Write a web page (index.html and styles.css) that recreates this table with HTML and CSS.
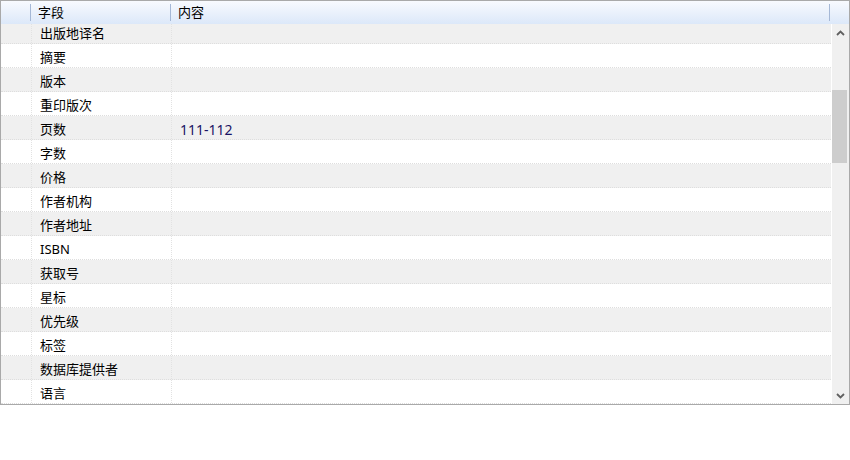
FILE: index.html
```html
<!DOCTYPE html>
<html lang="zh-CN">
<head>
<meta charset="utf-8">
<title>字段列表</title>
<link rel="stylesheet" href="styles.css">
</head>
<body>
<div class="grid">
  <div class="header">
    <div class="hcell h0"></div>
    <div class="hsep"></div>
    <div class="hcell h1">字段</div>
    <div class="hsep"></div>
    <div class="hcell h2">内容</div>
    <div class="hsep"></div>
    <div class="hfill"></div>
  </div>
  <div class="body">
    <div class="viewport">
      <div class="rows">
        <div class="row alt first"><div class="c0"></div><div class="c1">出版地译名</div><div class="c2"></div></div>
        <div class="row"><div class="c0"></div><div class="c1">摘要</div><div class="c2"></div></div>
        <div class="row alt"><div class="c0"></div><div class="c1">版本</div><div class="c2"></div></div>
        <div class="row"><div class="c0"></div><div class="c1">重印版次</div><div class="c2"></div></div>
        <div class="row alt"><div class="c0"></div><div class="c1">页数</div><div class="c2 value">111-112</div></div>
        <div class="row"><div class="c0"></div><div class="c1">字数</div><div class="c2"></div></div>
        <div class="row alt"><div class="c0"></div><div class="c1">价格</div><div class="c2"></div></div>
        <div class="row"><div class="c0"></div><div class="c1">作者机构</div><div class="c2"></div></div>
        <div class="row alt"><div class="c0"></div><div class="c1">作者地址</div><div class="c2"></div></div>
        <div class="row"><div class="c0"></div><div class="c1">ISBN</div><div class="c2"></div></div>
        <div class="row alt"><div class="c0"></div><div class="c1">获取号</div><div class="c2"></div></div>
        <div class="row"><div class="c0"></div><div class="c1">星标</div><div class="c2"></div></div>
        <div class="row alt"><div class="c0"></div><div class="c1">优先级</div><div class="c2"></div></div>
        <div class="row"><div class="c0"></div><div class="c1">标签</div><div class="c2"></div></div>
        <div class="row alt"><div class="c0"></div><div class="c1">数据库提供者</div><div class="c2"></div></div>
        <div class="row"><div class="c0"></div><div class="c1">语言</div><div class="c2"></div></div>
      </div>
    </div>
    <div class="scrollbar">
      <div class="sbtn">
        <svg width="9" height="6" viewBox="0 0 9 6"><path d="M1 5 L4.5 1.5 L8 5" fill="none" stroke="#606060" stroke-width="1.8"/></svg>
      </div>
      <div class="track"><div class="thumb"></div></div>
      <div class="sbtn">
        <svg width="9" height="6" viewBox="0 0 9 6"><path d="M1 1 L4.5 4.5 L8 1" fill="none" stroke="#606060" stroke-width="1.8"/></svg>
      </div>
    </div>
  </div>
</div>
</body>
</html>
```
FILE: styles.css
```css
html, body {
  margin: 0;
  padding: 0;
  background: #ffffff;
}
body {
  font-family: "Noto Sans", "Noto Sans CJK SC", sans-serif;
  font-size: 13px;
  color: #000;
}
.grid {
  width: 848px;
  height: 403px;
  border: 1px solid #a9a9a9;
  display: flex;
  flex-direction: column;
  background: #fff;
}
.header {
  height: 23px;
  display: flex;
  align-items: center;
  background: linear-gradient(#f8fafe, #dce8f9);
  flex: none;
}
.hcell {
  height: 23px;
  line-height: 23px;
  box-sizing: border-box;
  padding-left: 7px;
  white-space: nowrap;
}
.h0 { width: 29px; padding: 0; }
.h1 { width: 139px; }
.h2 { width: 658px; }
.hfill { flex: 1; }
.hsep {
  width: 1px;
  height: 17px;
  background: #a5b8d6;
  flex: none;
}
.body {
  flex: 1;
  display: flex;
  min-height: 0;
}
.viewport {
  width: 830px;
  overflow: hidden;
  flex: none;
}
.row {
  display: flex;
  height: 23px;
  line-height: 27px;
  border-bottom: 1px dotted #dedede;
  background: #fff;
}
.row.first {
  height: 19px;
  line-height: 19px;
}
.row.alt {
  background: #f0f0f0;
}
.c0 {
  width: 30px;
  border-right: 1px dotted #e2e2e2;
  flex: none;
}
.c1 {
  width: 131px;
  padding-left: 8px;
  border-right: 1px dotted #e2e2e2;
  flex: none;
  white-space: nowrap;
}
.c2 {
  flex: 1;
  padding-left: 8px;
}
.value {
  color: #1b1464;
  font-size: 14px;
}
.scrollbar {
  width: 17px;
  margin-left: 1px;
  background: #f0f0f0;
  display: flex;
  flex-direction: column;
  flex: none;
}
.sbtn {
  height: 17px;
  display: flex;
  align-items: center;
  justify-content: center;
  flex: none;
}
.track {
  flex: 1;
}
.thumb {
  margin: 49px 1px 0 0;
  width: 15px;
  height: 73px;
  background: #cdcdcd;
}
```
